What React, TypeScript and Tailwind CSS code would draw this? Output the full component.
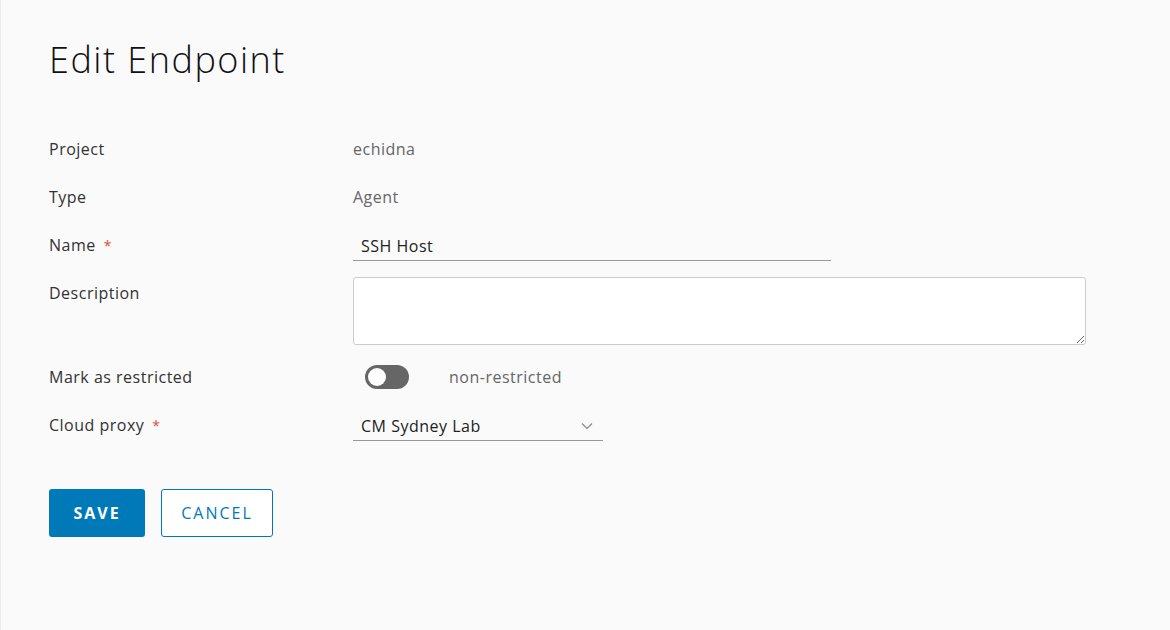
const font = { fontFamily: "'Open Sans', 'Noto Sans', sans-serif" };

const Label = ({ text, required }: { text: string; required?: boolean }) => (
  <div className="w-[304px] shrink-0 text-[16px] tracking-[0.5px] text-[#333]">
    {text}
    {required && <span className="ml-[8px] text-[14px] text-[#e0502e]">*</span>}
  </div>
);

export default function App() {
  return (
    <div
      className="min-h-[630px] w-full bg-[#fafafa] border-l border-[#ececec] pl-[48px] pt-[37px] text-[#333]"
      style={font}
    >
      <h1 className="text-[36px] font-light leading-[46px] text-[#111] tracking-[1.5px]">
        Edit Endpoint
      </h1>

      <div className="mt-[42px] flex flex-col">
        <div className="flex h-[48px] items-center">
          <Label text="Project" />
          <div className="text-[16px] tracking-[0.5px] text-[#666]">echidna</div>
        </div>
        <div className="flex h-[48px] items-center">
          <Label text="Type" />
          <div className="text-[16px] tracking-[0.5px] text-[#666]">Agent</div>
        </div>
        <div className="flex h-[48px] items-center">
          <Label text="Name" required />
          <div className="w-[478px] border-b border-[#999] pl-[8px] pt-[4px] pb-[2px] text-[16px] tracking-[0.5px] text-[#222]">
            SSH Host
          </div>
        </div>
        <div className="mt-[8px] flex items-start">
          <div className="pt-[4px]">
            <Label text="Description" />
          </div>
          <textarea className="h-[68px] w-[733px] rounded-[3px] border border-[#ccc] bg-white outline-none" />
        </div>
        <div className="mt-[8px] flex h-[48px] items-center">
          <Label text="Mark as restricted" />
          <div className="ml-[12px] flex h-[24px] w-[44px] items-center rounded-full bg-[#666] px-[3px]">
            <div className="h-[18px] w-[18px] rounded-full bg-white" />
          </div>
          <div className="ml-[40px] text-[16px] tracking-[0.5px] text-[#666]">non-restricted</div>
        </div>
        <div className="flex h-[48px] items-center">
          <Label text="Cloud proxy" required />
          <div className="flex w-[250px] items-center justify-between border-b border-[#999] pl-[8px] pr-[10px] pt-[4px] pb-[2px] text-[16px] tracking-[0.5px] text-[#222]">
            <span>CM Sydney Lab</span>
            <svg width="12" height="8" viewBox="0 0 12 8" fill="none">
              <path d="M1 1.5 L6 6.5 L11 1.5" stroke="#888" strokeWidth="1.2" />
            </svg>
          </div>
        </div>
      </div>

      <div className="mt-[40px] flex gap-[16px]">
        <button className="h-[48px] w-[96px] rounded-[3px] bg-[#0079b8] text-[16px] font-bold tracking-[2px] text-white">
          SAVE
        </button>
        <button className="h-[48px] w-[112px] rounded-[3px] border border-[#0079b8] bg-white text-[16px] tracking-[2px] text-[#0079b8]">
          CANCEL
        </button>
      </div>
    </div>
  );
}
